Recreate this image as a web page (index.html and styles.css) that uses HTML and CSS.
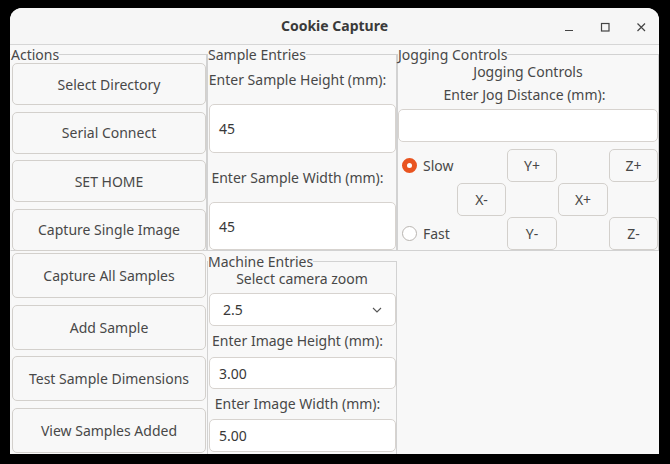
FILE: index.html
```html
<!DOCTYPE html>
<html>
<head>
<meta charset="utf-8">
<link rel="stylesheet" href="styles.css">
</head>
<body>
<div class="window">
  <div class="titlebar">
    <span class="title">Cookie Capture</span>
    <div class="controls">
      <svg class="ctl" width="12" height="12" viewBox="0 0 12 12"><path d="M2 9.5h8" stroke="#444" stroke-width="1.2"/></svg>
      <svg class="ctl" width="12" height="12" viewBox="0 0 12 12"><rect x="2.5" y="2.5" width="7.5" height="7.5" fill="none" stroke="#444" stroke-width="1.2"/></svg>
      <svg class="ctl" width="12" height="12" viewBox="0 0 12 12"><path d="M2.5 2.5l7.5 7.5M10 2.5l-7.5 7.5" stroke="#444" stroke-width="1.2"/></svg>
    </div>
  </div>
  <div class="content">
    <fieldset class="lf actions">
      <legend>Actions</legend>
      <div class="btn-col">
        <button class="btn">Select Directory</button>
        <button class="btn">Serial Connect</button>
        <button class="btn">SET HOME</button>
        <button class="btn">Capture Single Image</button>
      </div>
    </fieldset>
    <fieldset class="lf sample">
      <legend>Sample Entries</legend>
      <div class="lbl l1">Enter Sample Height (mm):</div>
      <div class="entry big e1">45</div>
      <div class="lbl l2">Enter Sample Width (mm):</div>
      <div class="entry big e2">45</div>
    </fieldset>
    <fieldset class="lf jog">
      <legend>Jogging Controls</legend>
      <div class="lbl jt">Jogging Controls</div>
      <div class="lbl jd">Enter Jog Distance (mm):</div>
      <div class="entry jentry"></div>
      <div class="jgrid">
        <div class="radio r-slow"><span class="dot on"></span>Slow</div>
        <button class="btn jb c3 r1">Y+</button>
        <button class="btn jb c5 r1">Z+</button>
        <button class="btn jb c2 r2">X-</button>
        <button class="btn jb c4 r2">X+</button>
        <div class="radio r-fast"><span class="dot"></span>Fast</div>
        <button class="btn jb c3 r3">Y-</button>
        <button class="btn jb c5 r3">Z-</button>
      </div>
    </fieldset>
    <div class="btn-col lower">
      <button class="btn tall">Capture All Samples</button>
      <button class="btn tall">Add Sample</button>
      <button class="btn tall">Test Sample Dimensions</button>
      <button class="btn tall">View Samples Added</button>
    </div>
    <fieldset class="lf machine">
      <legend>Machine Entries</legend>
      <div class="lbl m0">Select camera zoom</div>
      <div class="entry combo"><span>2.5</span>
        <svg width="10" height="6" viewBox="0 0 10 6"><path d="M1 1l4 4 4-4" fill="none" stroke="#555" stroke-width="1.1"/></svg>
      </div>
      <div class="lbl m1">Enter Image Height (mm):</div>
      <div class="entry sm m1e">3.00</div>
      <div class="lbl m2">Enter Image Width (mm):</div>
      <div class="entry sm m2e">5.00</div>
    </fieldset>
    <div class="empty"></div>
  </div>
</div>
</body>
</html>
```
FILE: styles.css
```css
html, body {
  margin: 0;
  padding: 0;
  background: #000;
}
body {
  padding: 8px 0 0 10px;
  font-family: "Noto Sans", "DejaVu Sans", sans-serif;
  font-size: 14px;
  color: #484848;
}
.window {
  width: 649px;
  height: 446px;
  background: #f8f8f8;
  border-radius: 12px 12px 0 0;
  overflow: hidden;
}
.titlebar {
  height: 36px;
  border-bottom: 1px solid #d6d6d6;
  background: #f6f6f6;
  display: flex;
  align-items: center;
  justify-content: center;
  position: relative;
}
.title {
  font-weight: bold;
  font-size: 14px;
  color: #3a3a3a;
  margin-top: -1px;
}
.controls {
  position: absolute;
  right: 12px;
  top: 13px;
  display: flex;
  gap: 24px;
}
.ctl { display: block; }
.content {
  display: grid;
  grid-template-columns: 197px 190px 262px;
  grid-template-rows: 206px 203px;
}
.lf {
  margin: 0;
  padding: 0;
  min-width: 0;
  border: 1px solid #d2d2d2;
  display: flex;
  flex-direction: column;
}
.lf legend {
  padding: 0;
  margin: 0;
  line-height: 15px;
  font-size: 14px;
  color: #484848;
}
.actions, .sample, .jog { margin-top: 2px; }
.actions { border-left-color: transparent; }
.btn {
  font: inherit;
  color: #484848;
  background: #f8f8f8;
  border: 1px solid #d3d0cc;
  border-radius: 5px;
  padding: 0;
  margin: 0;
  box-sizing: border-box;
}
.btn-col {
  display: flex;
  flex-direction: column;
  gap: 6.5px;
  padding: 1px 0 0 1px;
}
.btn-col .btn { height: 42px; width: 100%; }
.lower {
  padding: 2px 1px 0 2px;
  gap: 6.7px;
}
.lower .btn.tall { height: 45px; }
.lbl {
  height: 20px;
  line-height: 20px;
  text-align: center;
  white-space: nowrap;
}
.entry {
  background: #fff;
  border: 1px solid #d7d3cf;
  border-radius: 5px;
  box-sizing: border-box;
  color: #383838;
  display: flex;
  align-items: center;
  padding-left: 9px;
}
.sample .lbl { padding-right: 9px; }
.l1 { margin-top: 8px; }
.e1 { margin: 14px 0 0 1px; height: 49px; }
.l2 { margin-top: 15px; }
.e2 { margin: 14px 0 0 1px; height: 48px; }
.jt { margin-top: 0; }
.jd { margin-top: 3px; padding-right: 7px; }
.jentry { margin-top: 4px; height: 33px; }
.jgrid {
  margin-top: 7px;
  display: grid;
  grid-template-columns: 59px 50px 51px 51px 49px;
  grid-template-rows: 33px 33px 33px;
  row-gap: 1px;
}
.jb { width: calc(100% - 1px); height: 33px; }
.c5.jb { width: 100%; }
.c2 { grid-column: 2; }
.c3 { grid-column: 3; }
.c4 { grid-column: 4; }
.c5 { grid-column: 5; }
.r1 { grid-row: 1; }
.r2 { grid-row: 2; }
.r3 { grid-row: 3; }
.radio {
  display: flex;
  align-items: center;
  gap: 6px;
  padding-left: 4px;
}
.r-slow { grid-column: 1; grid-row: 1; }
.r-fast { grid-column: 1; grid-row: 3; }
.dot {
  width: 15px;
  height: 15px;
  border-radius: 50%;
  box-sizing: border-box;
  border: 1px solid #b9b5b1;
  background: #fff;
  flex: none;
}
.dot.on {
  border: 5px solid #e95420;
  background: #fff;
}
.machine { margin-top: 3px; height: 200px; }
.machine .lbl { padding-right: 9px; }
.machine .m0 { padding-right: 0; }
.combo {
  margin: 4px 0 0 1px;
  height: 33px;
  padding-left: 13px;
  padding-right: 13px;
  justify-content: space-between;
}
.combo svg { display: block; }
.m1 { margin-top: 5px; }
.m1e { margin: 6px 0 0 1px; height: 32px; }
.m2 { margin-top: 5px; }
.m2e { margin: 5px 0 0 1px; height: 33px; }
```
